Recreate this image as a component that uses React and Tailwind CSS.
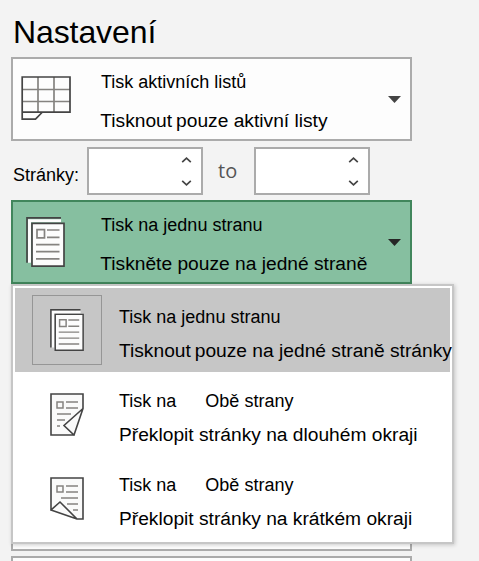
import React from 'react';

function SheetIcon() {
  return (
    <svg className="block h-12 w-[54px] shrink-0" viewBox="0 0 54 48" fill="none">
      <path d="M19 4V39M35 4V39M3 16.5H51M3 28.5H51" stroke="#858380" strokeWidth="1.7" />
      <path d="M3.2 4H51V39.2H3.2ZM3.2 39V46.2H16.5L23 39.5" stroke="#444" strokeWidth="1.7" />
    </svg>
  );
}

function PagesIcon({ className }) {
  return (
    <svg className={className} viewBox="1 0.9 39 49.2" preserveAspectRatio="none" fill="none">
      <path d="M3 46V3H36V6H6V46Z" fill="#fcfcfc" />
      <path d="M2 46V1.8H36" stroke="#444" strokeWidth="1.7" />
      <path d="M7 7.2H39V49.2H7Z" fill="#fcfcfc" stroke="#444" strokeWidth="1.7" />
      <path d="M12 13.4H19.5V21.4H12ZM22 13.7H34.5M22 21H34.5M11 28H34.5M11 35H34.5M11 42H34.5" stroke="#858380" strokeWidth="1.7" />
    </svg>
  );
}

function LongEdgeIcon() {
  return (
    <svg className="block h-[43px] w-[34px]" viewBox="0 0 34 43" fill="none">
      <path d="M1 1H33V15L24 42H1Z" fill="#fafafa" />
      <path d="M7 9H13V15H7ZM16 9H28M16 15H28M7 21H21M7 27H15M7 33H10" stroke="#858380" strokeWidth="1.5" />
      <path d="M33 15.5L14 32.5L24 42Z" fill="#fafafa" />
      <path d="M24 42H1V1H33V15.5L14 32.5L24 42L33 15.5" stroke="#444" strokeWidth="1.6" />
    </svg>
  );
}

function ShortEdgeIcon() {
  return (
    <svg className="block h-[43px] w-[34px]" viewBox="0 0 34 43" fill="none">
      <path d="M1 1H33V42H27L1 33Z" fill="#fafafa" />
      <path d="M7 9H13V15H7ZM16 9H28M16 15H28M11 21H28M17 27H28M23 33H28" stroke="#858380" strokeWidth="1.5" />
      <path d="M1 33L10 25L27 42Z" fill="#fafafa" />
      <path d="M1 33V1H33V42H27L10 25L1 33L27 42" stroke="#444" strokeWidth="1.6" />
    </svg>
  );
}

function Arrow({ className }) {
  return (
    <svg className={`block h-[7px] w-[13px] shrink-0 ${className}`} viewBox="0 0 13 7">
      <path d="M0 0H13L6.5 7Z" fill="currentColor" />
    </svg>
  );
}

function Spinner() {
  return (
    <div className="flex h-12 w-[116px] flex-col items-end justify-between border-2 border-[#ababab] bg-white pt-[8px] pr-[9px] pb-[7px] text-[#444]">
      <svg className="block h-[6px] w-[11px]" viewBox="0 0 11 6" fill="none">
        <path d="M1.2 5.2L5.5 1.2L9.8 5.2" stroke="currentColor" strokeWidth="1.7" />
      </svg>
      <svg className="block h-[6px] w-[11px]" viewBox="0 0 11 6" fill="none">
        <path d="M1.2 0.8L5.5 4.8L9.8 0.8" stroke="currentColor" strokeWidth="1.7" />
      </svg>
    </div>
  );
}

function MenuItem({ icon, title, detail, selected }) {
  return (
    <div className={`flex h-[84px] pl-[17px] ${selected ? 'bg-[#c6c6c6]' : 'bg-white'}`}>
      <div className={`mt-[7px] flex size-[70px] shrink-0 items-center justify-center border ${selected ? 'border-[#969696]' : 'border-transparent'}`}>
        {icon}
      </div>
      <div className="ml-[17px] pt-[19px] whitespace-nowrap">
        <div className="text-[18px] leading-[20px]">{title}</div>
        <div className="mt-[13px] text-[19.2px] leading-[22px]">{detail}</div>
      </div>
    </div>
  );
}

const bothSides = (
  <span className="flex gap-[29px]">
    <span>Tisk na</span>
    <span>Obě strany</span>
  </span>
);

export default function App() {
  return (
    <div className="h-[561px] w-[479px] overflow-hidden bg-[#f3f3f3] pt-[14px] pl-[11px] font-['Liberation_Sans',Arial,sans-serif] text-black">
      <h1 className="pl-[2px] text-[32px] leading-[36px] tracking-[-0.1px]">Nastavení</h1>

      <div className="mt-[7px] flex h-[84px] w-[401px] border-2 border-[#ababab] bg-[#fdfdfd] pl-[6px]">
        <div className="pt-[14px]"><SheetIcon /></div>
        <div className="ml-[28px] flex-1 pt-[13px] whitespace-nowrap">
          <div className="text-[18px] leading-[20px]">Tisk aktivních listů</div>
          <div className="mt-[18px] -ml-[0.7px] text-[19.2px] leading-[22px]">
            <span className="mr-[-1.4px]">Tisknout</span> pouze aktivní listy
          </div>
        </div>
        <Arrow className="mt-[37px] mr-[9px] text-[#444]" />
      </div>

      <div className="mt-[6px] flex h-12">
        <div className="w-[76px] pt-[18px] pl-[2px] text-[18px] leading-[20px]">Stránky:</div>
        <Spinner />
        <div className="w-[51px] pt-[12px] pl-[15px] font-['Open_Sans',sans-serif] text-[20px] leading-[24px] text-[#555]">to</div>
        <Spinner />
      </div>

      <div className="relative mt-[5px] h-[84px] w-[401px]">
        <div className="flex h-[84px] border-2 border-[#41865c] bg-[#86bfa0] pl-[13px]">
          <PagesIcon className="mt-[15px] block h-[50px] w-[39px] shrink-0" />
          <div className="ml-[36px] flex-1 pt-[13px] whitespace-nowrap">
            <div className="text-[18px] leading-[20px]">Tisk na jednu stranu</div>
            <div className="mt-[18px] -ml-[0.7px] text-[19.2px] leading-[22px]">Tiskněte pouze na jedné straně</div>
          </div>
          <Arrow className="mt-[37px] mr-[9px] text-[#262626]" />
        </div>

        <div className="absolute top-[84px] left-0 z-10 w-[443px] border-2 border-[#c6c6c6] bg-white p-[2px] shadow-[1px_1px_4px_rgba(0,0,0,0.2)]">
          <MenuItem
            selected
            icon={<PagesIcon className="block h-[42px] w-[34px]" />}
            title="Tisk na jednu stranu"
            detail={<><span className="mr-[-1.4px]">Tisknout</span> pouze na jedné straně stránky</>}
          />
          <MenuItem icon={<LongEdgeIcon />} title={bothSides} detail="Překlopit stránky na dlouhém okraji" />
          <MenuItem icon={<ShortEdgeIcon />} title={bothSides} detail="Překlopit stránky na krátkém okraji" />
        </div>
      </div>

      <div className="mt-[183px] h-[84px] w-[401px] border-2 border-[#ababab] bg-[#fdfdfd]" />
      <div className="mt-[5px] h-[84px] w-[401px] border-2 border-[#ababab] bg-[#fdfdfd]" />
    </div>
  );
}
